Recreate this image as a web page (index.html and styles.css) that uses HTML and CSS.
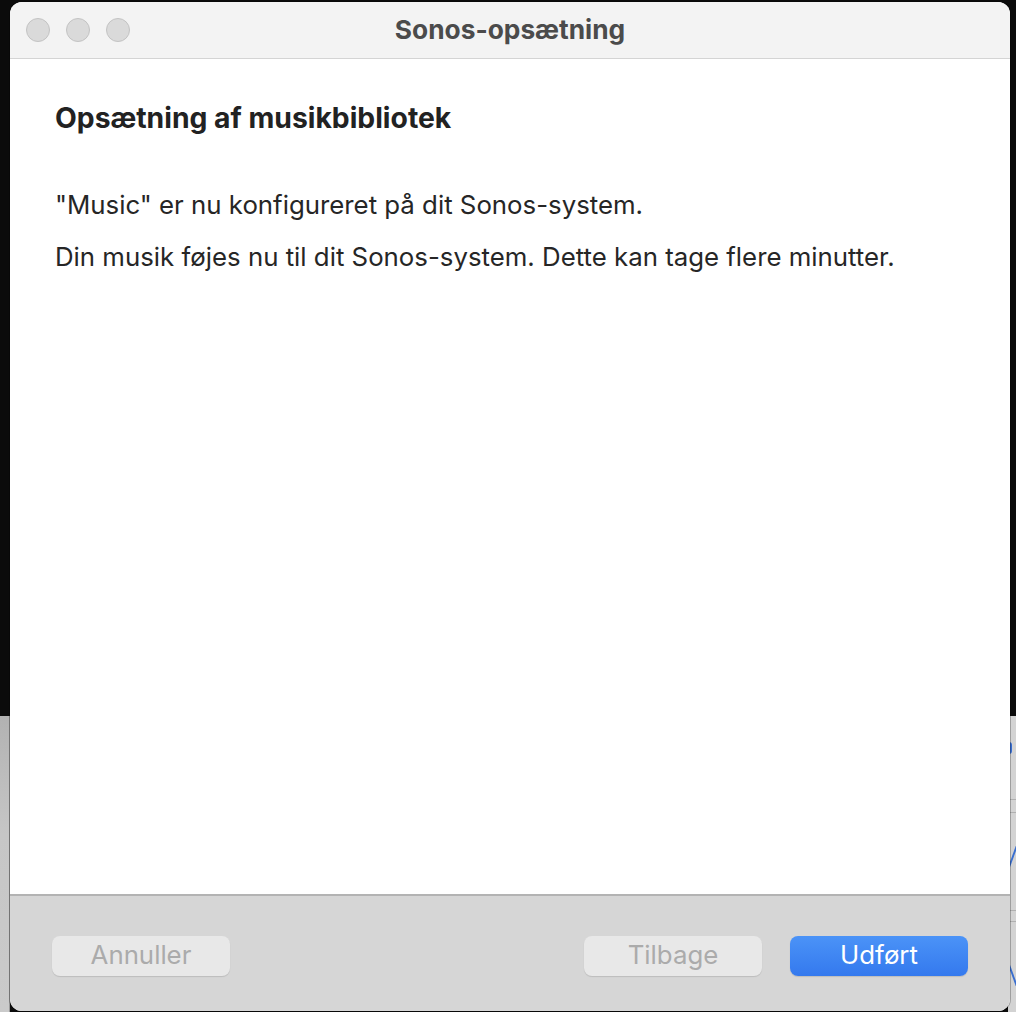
FILE: index.html
```html
<!DOCTYPE html>
<html lang="da">
<head>
<meta charset="utf-8">
<title>Sonos-opsætning</title>
<link rel="stylesheet" href="styles.css">
</head>
<body>
<div class="desktop">
  <div class="back-window">
    <div class="back-left"></div>
    <div class="back-right">
      <span class="glyph g1"></span>
      <span class="rule r1"></span>
      <span class="rule r2"></span>
      <span class="glyph g2"></span>
      <span class="rule r3"></span>
      <span class="rule r4"></span>
      <span class="glyph g3"></span>
    </div>
  </div>
  <div class="window">
    <div class="titlebar">
      <div class="lights">
        <span class="light"></span>
        <span class="light"></span>
        <span class="light"></span>
      </div>
      <div class="title">Sonos-opsætning</div>
    </div>
    <div class="content">
      <h1 class="heading">Opsætning af musikbibliotek</h1>
      <p class="text">"Music" er nu konfigureret på dit Sonos-system.</p>
      <p class="text">Din musik føjes nu til dit Sonos-system. Dette kan tage flere minutter.</p>
    </div>
    <div class="footer">
      <button class="btn btn-disabled">Annuller</button>
      <div class="spacer"></div>
      <button class="btn btn-disabled">Tilbage</button>
      <button class="btn btn-primary">Udført</button>
    </div>
  </div>
</div>
</body>
</html>
```

FILE: styles.css
```css
* { box-sizing: border-box; }
html, body {
  margin: 0;
  padding: 0;
  background: #0b0b0b;
  width: 1016px;
  height: 1012px;
  overflow: hidden;
}
.desktop {
  position: relative;
  width: 1016px;
  height: 1012px;
  font-family: Inter, "Noto Sans", "Liberation Sans", sans-serif;
}
.back-window {
  position: absolute;
  left: 0;
  top: 716px;
  width: 1016px;
  height: 296px;
  display: flex;
  justify-content: space-between;
}
.back-left {
  width: 10px;
  height: 100%;
  background: linear-gradient(to bottom, #b2b2b2, #c6c6c6 40%, #cacaca);
  border-right: 1px solid #9a9a9a;
}
.back-right {
  position: relative;
  width: 8px;
  height: 100%;
  background: #d3d3d3;
}
.rule {
  position: absolute;
  left: 0;
  right: 0;
  height: 1px;
  background: #b0b0b0;
}
.r1 { top: 83px; }
.r2 { top: 96px; }
.r3 { top: 194px; }
.r4 { top: 205px; }
.glyph {
  position: absolute;
  left: 1px;
  width: 4px;
  background: #3a6fd0;
}
.g1 { top: 26px; height: 12px; width: 3px; border-radius: 0 3px 3px 0; background: transparent; border: 2px solid #3a6fd0; border-left: none; }
.g2 { top: 130px; height: 26px; width: 2px; transform: skewX(-20deg); left: 3px; }
.g3 { top: 244px; height: 26px; width: 2px; transform: skewX(20deg); left: 3px; }

.window {
  position: absolute;
  left: 10px;
  top: 2px;
  width: 1000px;
  height: 1009px;
  border-radius: 12px;
  overflow: hidden;
  display: flex;
  flex-direction: column;
  background: #ffffff;
  box-shadow: 0 0 0 1px rgba(0,0,0,0.25);
}
.titlebar {
  height: 57px;
  flex: none;
  background: #f3f3f3;
  border-bottom: 1px solid #d4d4d4;
  display: flex;
  align-items: center;
  position: relative;
}
.lights {
  display: flex;
  gap: 16px;
  padding-left: 16px;
}
.light {
  width: 24px;
  height: 24px;
  border-radius: 50%;
  background: #dadada;
  border: 1px solid #c3c3c3;
}
.title {
  position: absolute;
  left: 0;
  right: 0;
  top: 0;
  bottom: 2px;
  display: flex;
  align-items: center;
  justify-content: center;
  font-weight: 700;
  font-size: 26.3px;
  color: #4b4b4b;
}
.content {
  flex: 1;
  padding: 42px 45px 0 45px;
  background: #ffffff;
}
.heading {
  margin: 0 0 53px 0;
  font-size: 28.3px;
  font-weight: 700;
  color: #222222;
  line-height: 34px;
}
.text {
  margin: 0 0 18px 0;
  font-size: 25.8px;
  line-height: 34px;
  color: #262626;
}
.footer {
  flex: none;
  height: 117px;
  background: #d6d6d6;
  border-top: 2px solid #b3b3b3;
  display: flex;
  align-items: flex-start;
  padding: 40px 42px 0 42px;
  gap: 28px;
}
.spacer { flex: 1; }
.btn {
  width: 178px;
  height: 40px;
  border-radius: 8px;
  border: none;
  font-family: Inter, "Noto Sans", "Liberation Sans", sans-serif;
  font-size: 25.8px;
  line-height: 38px;
  padding: 0 0 2px 0;
}
.btn-disabled {
  background: #e8e8e8;
  color: #ababab;
  box-shadow: 0 1px 1px rgba(0,0,0,0.12);
}
.btn-primary {
  background: linear-gradient(to bottom, #4b93f7, #3479ee);
  color: #ffffff;
  box-shadow: 0 1px 1px rgba(0,0,0,0.12);
}
```
